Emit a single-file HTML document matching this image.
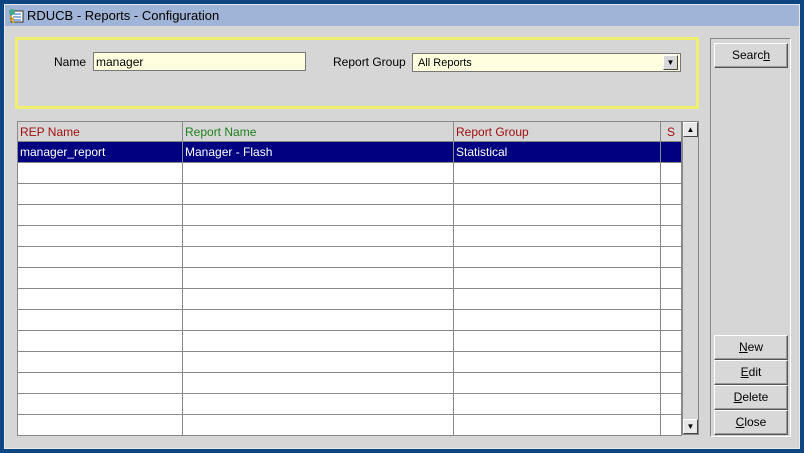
<!DOCTYPE html><html><head><style>
*{margin:0;padding:0;box-sizing:border-box}
body{width:804px;height:453px;background:#0d4682;font-family:"Liberation Sans",sans-serif;font-size:12px;position:relative;overflow:hidden}
.win{position:absolute;left:4px;top:4px;width:796px;height:445px;background:#d6d6d6;border:1px solid #e8e8e8}
.title{position:absolute;left:0;top:0;width:794px;height:21px;background:#9fb4d6;font-size:13px;line-height:21px;padding-left:22px;color:#000}
.a{position:absolute}
.btn{position:absolute;background:#d8d8d8;border:1px solid;border-color:#fff #555 #555 #fff;box-shadow:inset -1px -1px #999;text-align:center;line-height:22px;font-size:12px}
table{border-collapse:collapse;position:absolute;left:17px;top:121px;background:#fff}
td{border:1px solid #888;height:21px;padding:0 2px;white-space:nowrap;font-size:12px}
tr.h td{background:#d6d6d6;height:20px}
tr.s td{background:#000080;color:#fff}
</style></head><body>
<div class="win">
<div class="title">RDUCB - Reports - Configuration</div>
<svg class="a" style="left:3px;top:3px" width="16" height="16"><rect x="3" y="3" width="12" height="11" fill="#fff" stroke="#333"/><path d="M5 6h8M5 9h8M5 12h8" stroke="#2060c0"/><path d="M2 8l3 3-2 1 3 3" stroke="#e0a000" fill="none" stroke-width="1.5"/><circle cx="4" cy="4" r="3" fill="#4a8"/></svg>
</div>
<div class="a" style="left:15px;top:37px;width:684px;height:72px;border:3px solid #f0f070"></div>
<div class="a" style="left:54px;top:55px;font-size:12px">Name</div>
<div class="a" style="left:93px;top:52px;width:213px;height:19px;background:#ffffe0;border:1px solid #777;padding-left:2px;line-height:19px">manager</div>
<div class="a" style="left:333px;top:55px">Report Group</div>
<div class="a" style="left:412px;top:53px;width:269px;height:19px;background:#ffffe0;border:1px solid #777;padding-left:5px;line-height:19px;font-size:11px">All Reports</div>
<div class="a" style="left:663px;top:55px;width:15px;height:15px;background:#d8d8d8;border:1px solid;border-color:#fff #444 #444 #fff;font-size:8px;text-align:center;line-height:14px">▼</div>
<table>
<colgroup><col style="width:165px"><col style="width:271px"><col style="width:207px"><col style="width:21px"></colgroup>
<tr class="h"><td style="color:#a01010">REP Name</td><td style="color:#208020">Report Name</td><td style="color:#a01010">Report Group</td><td style="color:#a01010;text-align:center">S</td></tr>
<tr class="s"><td>manager_report</td><td>Manager - Flash</td><td>Statistical</td><td></td></tr>
<tr><td></td><td></td><td></td><td></td></tr><tr><td></td><td></td><td></td><td></td></tr><tr><td></td><td></td><td></td><td></td></tr><tr><td></td><td></td><td></td><td></td></tr><tr><td></td><td></td><td></td><td></td></tr><tr><td></td><td></td><td></td><td></td></tr><tr><td></td><td></td><td></td><td></td></tr><tr><td></td><td></td><td></td><td></td></tr><tr><td></td><td></td><td></td><td></td></tr><tr><td></td><td></td><td></td><td></td></tr><tr><td></td><td></td><td></td><td></td></tr><tr><td></td><td></td><td></td><td></td></tr><tr><td></td><td></td><td></td><td></td></tr>
</table>
<div class="a" style="left:682px;top:121px;width:17px;height:314px;background:#d6d6d6;border:1px solid #888"></div>
<div class="a" style="left:683px;top:122px;width:15px;height:15px;background:#e8e8e8;border:1px solid;border-color:#fff #444 #444 #fff;font-size:8px;text-align:center;line-height:13px">▲</div>
<div class="a" style="left:683px;top:419px;width:15px;height:15px;background:#e8e8e8;border:1px solid;border-color:#fff #444 #444 #fff;font-size:8px;text-align:center;line-height:13px">▼</div>
<div class="a" style="left:710px;top:38px;width:81px;height:399px;border:1px solid;border-color:#888 #fff #fff #888"></div>
<div class="btn" style="left:714px;top:43px;width:74px;height:25px">Searc<u>h</u></div>
<div class="btn" style="left:714px;top:335px;width:74px;height:25px"><u>N</u>ew</div>
<div class="btn" style="left:714px;top:360px;width:74px;height:25px"><u>E</u>dit</div>
<div class="btn" style="left:714px;top:385px;width:74px;height:25px"><u>D</u>elete</div>
<div class="btn" style="left:714px;top:410px;width:74px;height:25px"><u>C</u>lose</div>
</body></html>
